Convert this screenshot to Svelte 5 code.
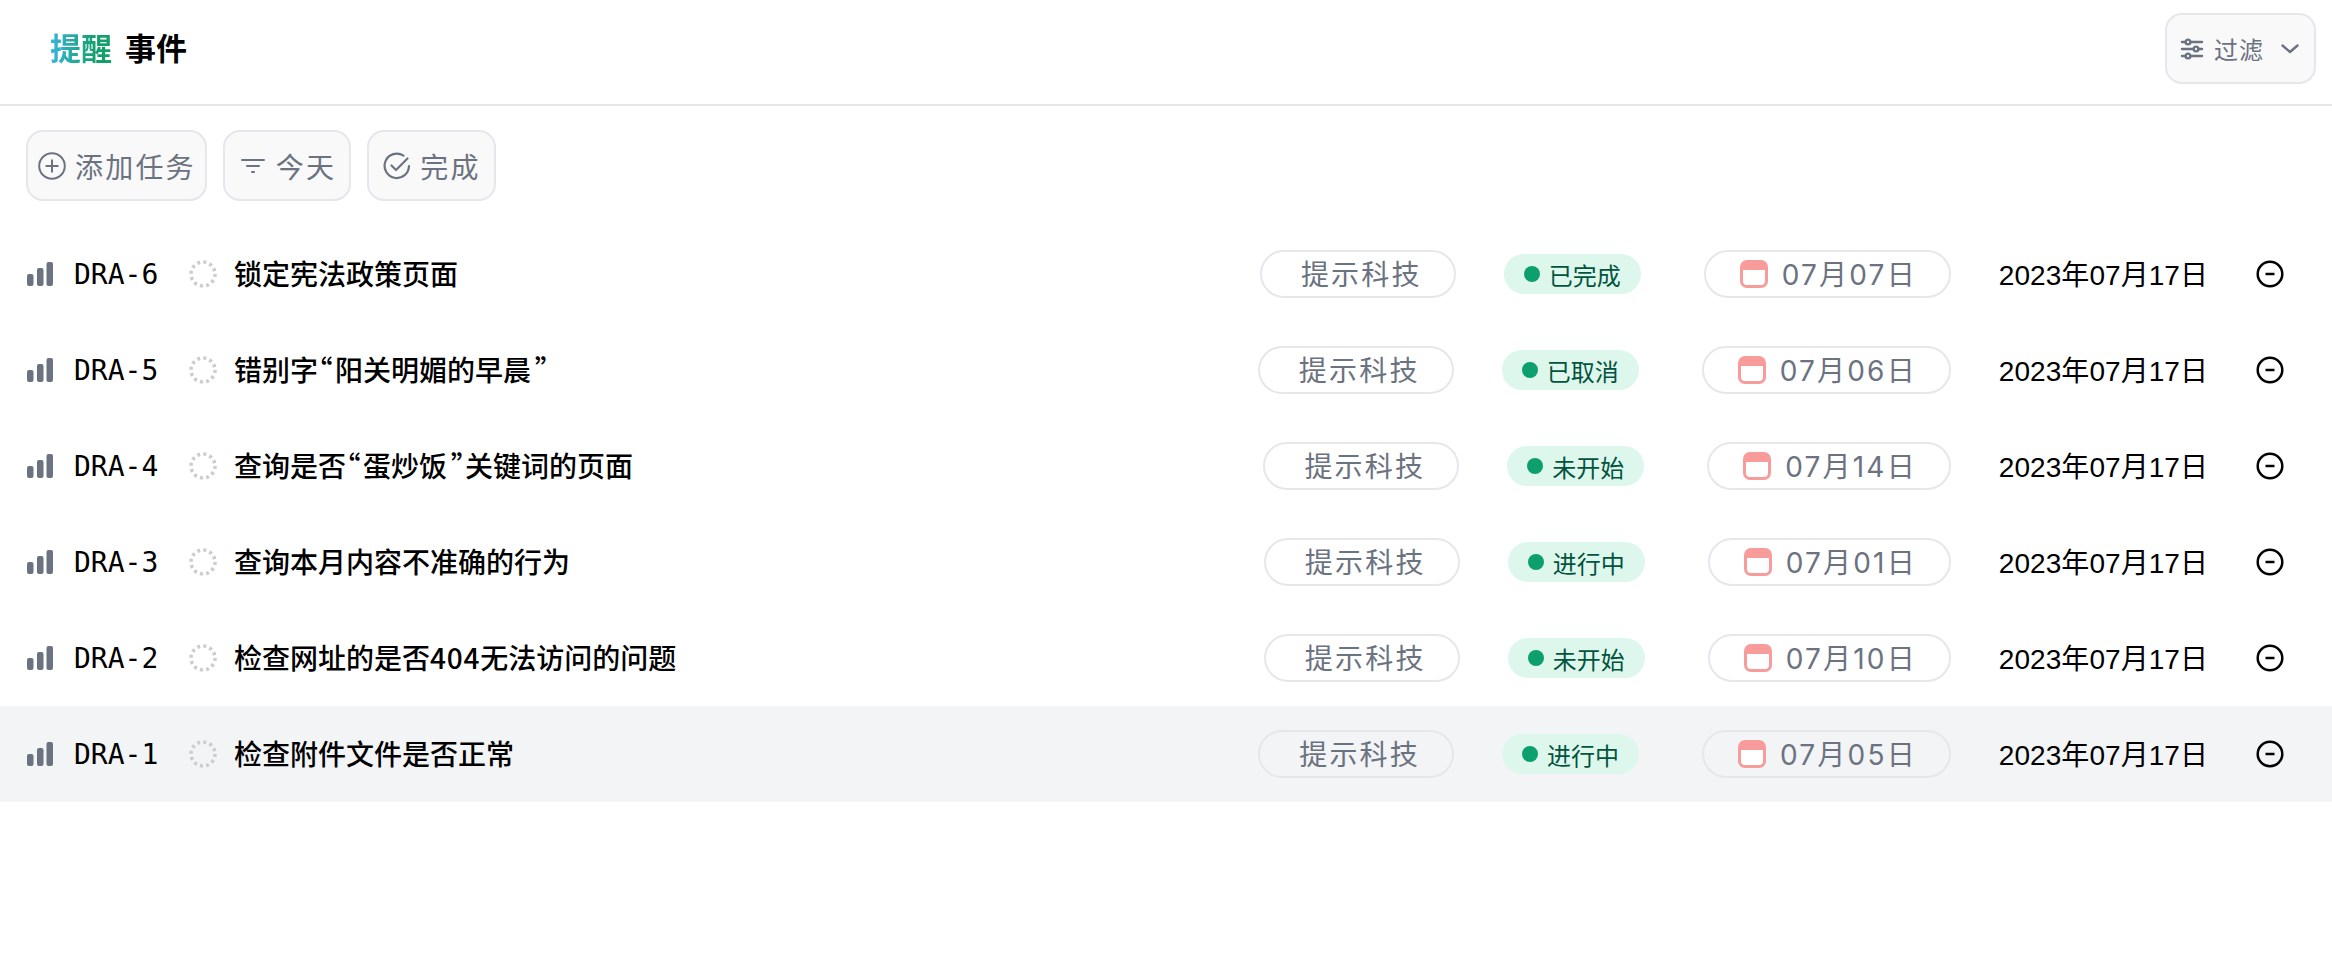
<script>
	const tasks = [
		{ id: 'DRA-6', title: '锁定宪法政策页面', status: '已完成', due: '07月07日' },
		{ id: 'DRA-5', title: '错别字“阳关明媚的早晨”', status: '已取消', due: '07月06日' },
		{ id: 'DRA-4', title: '查询是否“蛋炒饭”关键词的页面', status: '未开始', due: '07月14日' },
		{ id: 'DRA-3', title: '查询本月内容不准确的行为', status: '进行中', due: '07月01日' },
		{ id: 'DRA-2', title: '检查网址的是否404无法访问的问题', status: '未开始', due: '07月10日' },
		{ id: 'DRA-1', title: '检查附件文件是否正常', status: '进行中', due: '07月05日', active: true }
	];

	// curly quotes and digits get their own span so their widths can be tuned
	const splitTitle = (title) => title.split(/([“”]|\d+)/).filter(Boolean);
	const partClass = (part) =>
		part === '“' ? 'open' : part === '”' ? 'close' : /\d/.test(part) ? 'digits' : '';
</script>

<div class="page">
	<header class="topbar">
		<h1 class="heading"><span class="brand">提醒</span><span>事件</span></h1>
		<button class="btn filter" type="button">
			<svg width="24" height="24" viewBox="0 0 24 24" fill="none" stroke="currentColor" stroke-width="2.4" stroke-linecap="round">
				<path d="M2 5h4M10 5h12M2 12h12M18 12h4M2 19h4M10 19h12" />
				<circle cx="8" cy="5" r="2.4" />
				<circle cx="16" cy="12" r="2.4" />
				<circle cx="8" cy="19" r="2.4" />
			</svg>
			<span class="filter-label">过滤</span>
			<svg class="chevron" width="20" height="20" viewBox="0 0 20 20" fill="none" stroke="currentColor" stroke-width="2.4" stroke-linecap="round" stroke-linejoin="round">
				<path d="M2.5 6.5 10 13l7.5-6.5" />
			</svg>
		</button>
	</header>

	<div class="toolbar">
		<button class="btn action first" type="button">
			<svg width="28" height="28" viewBox="0 0 28 28" fill="none" stroke="currentColor" stroke-width="2">
				<circle cx="14" cy="14" r="12.8" />
				<path d="M14 7.5v13M7.5 14h13" />
			</svg>
			添加任务
		</button>
		<button class="btn action" type="button">
			<svg width="28" height="28" viewBox="0 0 28 28" fill="none" stroke="currentColor" stroke-width="2" stroke-linecap="round">
				<path d="M3 8h22M8 14h12M13 20h2" />
			</svg>
			今天
		</button>
		<button class="btn action" type="button">
			<svg width="28" height="28" viewBox="0 0 28 28" fill="none" stroke="currentColor" stroke-width="2.2" stroke-linecap="round" stroke-linejoin="round">
				<path d="M20.5 3.6A12.2 12.2 0 1 0 26 14" />
				<path d="M8.5 13.5 13 18 24.5 6.5" />
			</svg>
			完成
		</button>
	</div>

	<div class="list">
		{#each tasks as task}
			<div class="row" class:active={task.active}>
				<svg class="bars" width="26" height="24" viewBox="0 0 26 24" fill="#6b7280">
					<rect x="0" y="12" width="6.5" height="12" rx="2" />
					<rect x="10" y="6" width="6.5" height="18" rx="2" />
					<rect x="19.5" y="0" width="6.5" height="24" rx="2" />
				</svg>
				<span class="code">{task.id}</span>
				<svg class="spinner" width="28" height="28" viewBox="0 0 28 28" fill="none" stroke="#cbcdd1" stroke-width="3.6" stroke-dasharray="3 3.28">
					<circle cx="14" cy="14" r="12" />
				</svg>
				<span class="title">{#each splitTitle(task.title) as part}<span class={partClass(part)}>{part}</span>{/each}</span>
				<span class="pill company">提示科技</span>
				<span class="status"><i class="dot"></i>{task.status}</span>
				<span class="pill due">
					<svg width="28" height="28" viewBox="0 0 28 28">
						<rect width="28" height="28" rx="7" fill="#f89b9b" />
						<path d="M3 10h22v11a4 4 0 0 1-4 4H7a4 4 0 0 1-4-4z" fill="#fff" />
					</svg>
					{task.due}
				</span>
				<span class="created">2023年07月17日</span>
				<svg class="remove" width="28" height="28" viewBox="0 0 28 28" fill="none" stroke="#000" stroke-width="2.5">
					<circle cx="14" cy="14" r="12.3" />
					<path d="M9.5 14h9" />
				</svg>
			</div>
		{/each}
	</div>
</div>

<style>
	:global(body) {
		background: #fff;
	}

	.page {
		font-family: Inter, 'Noto Sans CJK SC', sans-serif;
		font-size: 28px;
		color: #000;
		min-height: 978px;
	}

	.topbar {
		display: flex;
		justify-content: space-between;
		align-items: flex-start;
		height: 106px;
		box-sizing: border-box;
		padding: 13px 16px 0 50px;
		border-bottom: 2px solid #e5e7eb;
	}

	.heading {
		display: flex;
		gap: 13px;
		margin: 0;
		padding-top: 12px;
		font-family: 'Noto Sans CJK SC', sans-serif;
		font-size: 31px;
		line-height: 44px;
		font-weight: 600;
	}

	.brand {
		background: linear-gradient(90deg, #38b4dc, #12a06a 75%);
		-webkit-background-clip: text;
		background-clip: text;
		color: transparent;
	}

	.btn {
		display: flex;
		align-items: center;
		box-sizing: border-box;
		height: 71px;
		background: #f9f9fa;
		border: 2px solid #e5e7eb;
		border-radius: 17px;
		color: #6b7280;
		font-family: inherit;
		white-space: nowrap;
	}

	.filter {
		width: 151px;
		padding: 0 14px 0 13px;
		font-size: 24px;
	}

	.filter-label {
		margin-left: 10px;
		letter-spacing: 1px;
	}

	.chevron {
		margin-left: auto;
	}

	.toolbar {
		display: flex;
		gap: 16px;
		padding: 24px 26px 25px;
	}

	.action {
		gap: 9px;
		padding: 0 13px 0 14px;
		font-size: 28px;
		letter-spacing: 2.2px;
	}

	.action.first {
		padding: 0 9px 0 10px;
	}

	.row {
		display: flex;
		align-items: center;
		height: 96px;
		padding: 0 48px 0 27px;
	}

	.row.active {
		background: #f3f4f6;
	}

	.code {
		margin-left: 21px;
		width: 115px;
		font-family: 'DejaVu Sans Mono', monospace;
	}

	.spinner {
		flex: none;
	}

	.title {
		margin-left: 17px;
		margin-right: auto;
		padding-bottom: 2px;
		font-family: 'Noto Sans CJK SC', sans-serif;
		font-feature-settings: 'palt';
		font-weight: 500;
	}

	.open {
		margin-right: 3px;
	}

	.close {
		margin-left: 4px;
	}

	.digits {
		letter-spacing: 0.8px;
	}

	.pill {
		display: flex;
		align-items: center;
		box-sizing: border-box;
		height: 48px;
		padding-bottom: 2px;
		border: 2px solid #e5e7eb;
		border-radius: 24px;
		color: #6b7280;
		letter-spacing: 2.2px;
	}

	.pill svg {
		margin-top: 2px;
	}

	.company {
		padding-left: 39px;
		padding-right: 32px;
	}

	.status {
		display: flex;
		align-items: center;
		height: 40px;
		margin-left: 48px;
		padding: 0 20px;
		border-radius: 20px;
		background: #def7ec;
		color: #03543f;
		font-size: 24px;
	}

	.dot {
		width: 16px;
		height: 16px;
		margin-right: 9px;
		border-radius: 50%;
		background: #0e9f6e;
	}

	.due {
		gap: 14px;
		margin-left: 63px;
		padding-left: 34px;
		padding-right: 32px;
	}

	.created {
		margin-left: 48px;
		padding-bottom: 2px;
		font-family: 'Liberation Sans', 'Noto Sans CJK SC', sans-serif;
		letter-spacing: 0.05px;
	}

	.remove {
		margin-left: 48px;
	}
</style>
